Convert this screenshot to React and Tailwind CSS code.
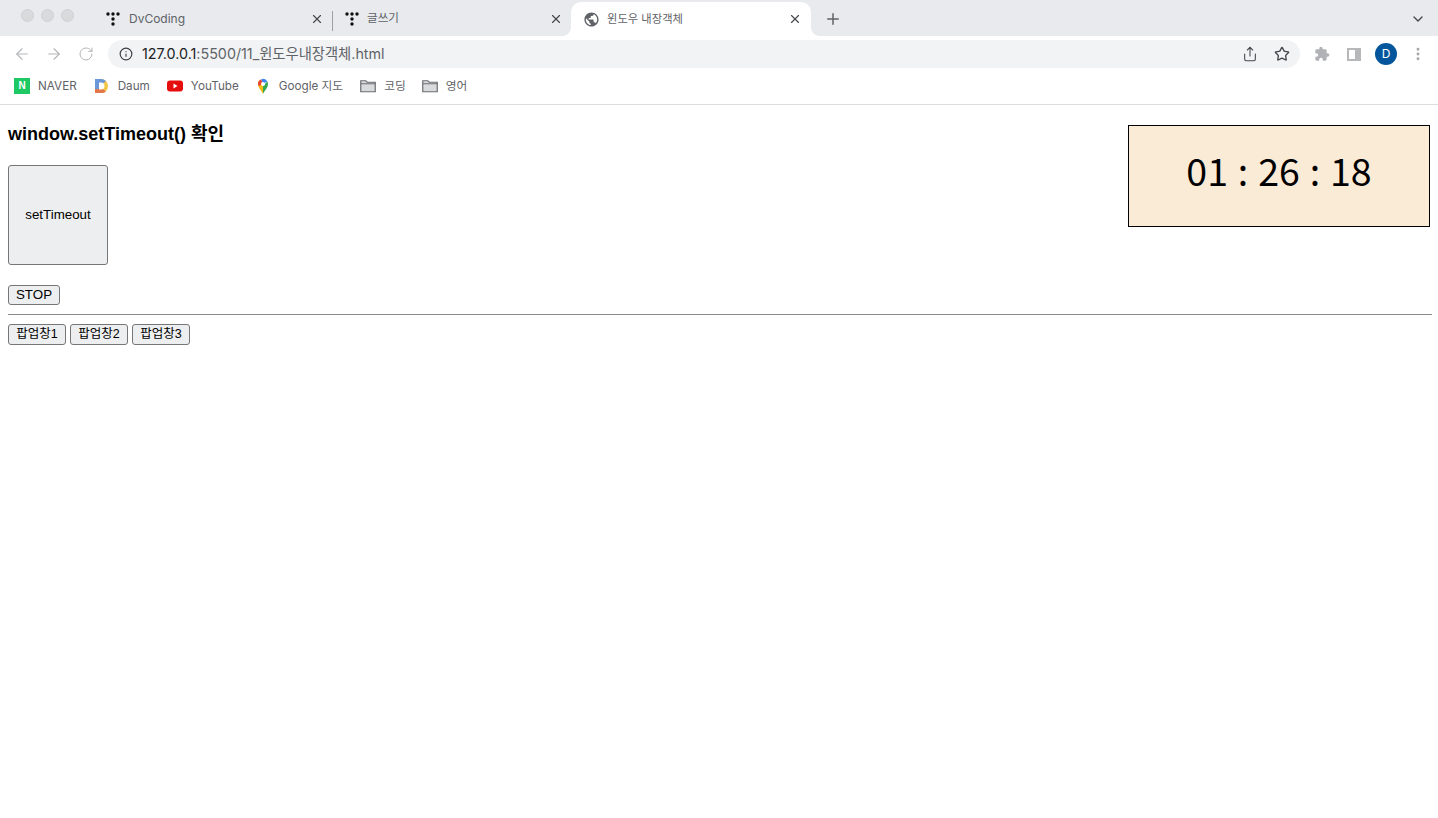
import { ArrowLeft, ArrowRight, RotateCw, Info, Star, Share, X, Plus, ChevronDown, EllipsisVertical } from "lucide-react";

const sans = "font-['Inter','Noto_Sans_CJK_KR',sans-serif]";

function DvIcon() {
    return (
        <svg width="16" height="16" viewBox="0 0 16 16" className="shrink-0">
            <circle cx="3" cy="3" r="1.7" fill="#111" />
            <circle cx="8" cy="3" r="1.7" fill="#111" />
            <circle cx="13" cy="3" r="1.7" fill="#111" />
            <circle cx="8" cy="8" r="1.7" fill="#111" />
            <circle cx="8" cy="13" r="1.7" fill="#111" />
        </svg>
    );
}

function GlobeIcon() {
    return (
        <svg width="17" height="17" viewBox="0 0 24 24" fill="#5f6368" className="shrink-0">
            <path d="M12 2C6.48 2 2 6.48 2 12s4.48 10 10 10 10-4.48 10-10S17.52 2 12 2zm-1 17.93c-3.95-.49-7-3.85-7-7.93 0-.62.08-1.21.21-1.79L9 15v1c0 1.1.9 2 2 2v1.93zm6.9-2.54c-.26-.81-1-1.39-1.9-1.39h-1v-3c0-.55-.45-1-1-1H8v-2h2c.55 0 1-.45 1-1V7h2c1.1 0 2-.9 2-2v-.41c2.93 1.19 5 4.06 5 7.41 0 2.08-.8 3.97-2.1 5.39z" />
        </svg>
    );
}

function Tab({ icon, title, titleClass, active, divider }) {
    return (
        <div
            className={`relative flex h-full items-center ${active ? "w-[240px] rounded-t-[10px] bg-white pl-[12px] pr-[9px]" : "w-[239px] pl-[12px] pr-[8px]"}`}
        >
            {icon}
            <span className={`flex-1 text-[#5f6368] ${sans} ${titleClass}`}>{title}</span>
            <X size={14} strokeWidth={2} className="text-[#45474a]" />
            {divider && <div className="absolute -right-px top-[9px] h-[20px] w-px bg-[#9aa0a6]" />}
            {active && (
                <>
                    <div className="absolute bottom-0 -left-[8px] h-[8px] w-[8px] bg-[radial-gradient(circle_at_0_0,#e8eaed_7.5px,#ffffff_8px)]" />
                    <div className="absolute bottom-0 -right-[8px] h-[8px] w-[8px] bg-[radial-gradient(circle_at_100%_0,#e8eaed_7.5px,#ffffff_8px)]" />
                </>
            )}
        </div>
    );
}

function NaverIcon() {
    return (
        <div className="flex h-4 w-4 items-center justify-center bg-[#1ec964] text-[10px] font-bold text-white font-['Liberation_Sans',sans-serif]">
            N
        </div>
    );
}

function DaumIcon() {
    return (
        <svg width="16" height="16" viewBox="0 0 16 16">
            <path d="M1 1h6a7 7 0 0 1 0 14H1z" fill="#f3c644" />
            <path d="M1 15V9h5l6 4.500A7 7 0 0 1 7 15z" fill="#e2774a" />
            <path d="M1 1h6a7 7 0 0 1 5 2L7 7 5 11 1 11z" fill="#6b97d8" />
            <path d="M5 4.500h2a3.500 3.500 0 0 1 0 7H5z" fill="#fff" />
        </svg>
    );
}

function YoutubeIcon() {
    return (
        <svg width="16" height="16" viewBox="0 0 16 16">
            <rect x="0" y="2.500" width="16" height="11" rx="3" fill="#e60d0d" />
            <path d="M6.500 5.500v5L10.500 8z" fill="#fff" />
        </svg>
    );
}

function MapsIcon() {
    return (
        <svg width="16" height="16" viewBox="0 0 16 16">
            <path d="M8 16C6.500 12.500 3 10 3 6a5 5 0 0 1 3-4.600L8 6z" fill="#f5b915" />
            <path d="M8 16c1.500-3.500 5-6 5-10a5 5 0 0 0-.6-2.400L8 8z" fill="#34a853" />
            <path d="M6 1.400A5 5 0 0 1 12.400 3.600L8 6z" fill="#4285f4" />
            <path d="M3 6a5 5 0 0 1 3-4.600L8 6 3.500 8z" fill="#ea4335" />
            <circle cx="8" cy="6" r="2" fill="#fff" />
        </svg>
    );
}

function FolderIcon() {
    return (
        <svg width="16" height="16" viewBox="0 0 16 16">
            <path d="M.75 2.750h5l1.500 1.500h8v9.500H.75z" fill="#d9dadc" stroke="#6b6e72" strokeWidth="1.200" />
            <path d="M.75 5.750h14.500" fill="none" stroke="#6b6e72" strokeWidth="1" />
        </svg>
    );
}

function Bookmark({ icon, label, className }) {
    return (
        <div className={`flex items-center gap-[8px] ${className}`}>
            {icon}
            <span className={`mt-px text-[11.7px] text-[#5f6368] ${sans}`}>{label}</span>
        </div>
    );
}

function BrowserChrome() {
    return (
        <div className="border-b border-[#dadce0] bg-white">
            {/* Tab strip */}
            <div className="flex h-[36px] items-end bg-[#e8eaed]">
                <div className="flex h-full w-[93px] items-center gap-[7px] pb-[6px] pl-[21px]">
                    <div className="h-[13px] w-[13px] rounded-full border border-[#cfd0d2] bg-[#d9dadc]" />
                    <div className="h-[13px] w-[13px] rounded-full border border-[#cfd0d2] bg-[#d9dadc]" />
                    <div className="h-[13px] w-[13px] rounded-full border border-[#cfd0d2] bg-[#d9dadc]" />
                </div>
                <div className="h-[34px] w-[239px]">
                    <Tab icon={<DvIcon />} title="DvCoding" titleClass="ml-[8px] text-xs" divider />
                </div>
                <div className="h-[34px] w-[239px]">
                    <Tab icon={<DvIcon />} title="글쓰기" titleClass="ml-[7px] text-[11.6px]" />
                </div>
                <div className="h-[34px] w-[240px]">
                    <Tab icon={<GlobeIcon />} title="윈도우 내장객체" titleClass="ml-[7px] text-[11.3px]" active />
                </div>
                <div className="flex h-[34px] flex-1 items-center justify-between pl-[13px] pr-[12px]">
                    <Plus size={18} strokeWidth={2} className="text-[#5f6368]" />
                    <ChevronDown size={16} strokeWidth={2} className="text-[#45474a]" />
                </div>
            </div>

            {/* Toolbar */}
            <div className="flex h-[32px] items-end">
                <div className="flex h-[28px] w-[108px] items-center gap-[14px] pl-[13px]">
                    <ArrowLeft size={18} strokeWidth={1.5} className="text-[#b4b6b9]" />
                    <ArrowRight size={18} strokeWidth={1.5} className="text-[#b4b6b9]" />
                    <RotateCw size={16} strokeWidth={1.5} className="ml-px text-[#b4b6b9]" />
                </div>
                <div className="flex h-[28px] w-[1192px] items-center rounded-full bg-[#f1f3f4] pl-[11px] pr-[10px]">
                    <Info size={14} strokeWidth={2} className="text-[#3c4043]" />
                    <span className={`ml-[9px] flex-1 text-[14.3px] text-[#5f6368] ${sans}`}>
                        <span className="text-[#202124]">127.0.0.1</span>:5500/11_윈도우내장객체.html
                    </span>
                    <Share size={16} strokeWidth={1.6} className="text-[#45474a]" />
                    <Star size={16} strokeWidth={2} className="ml-[16px] text-[#45474a]" />
                </div>
                <div className="flex h-[28px] flex-1 items-center pl-[14px]">
                    <svg width="16" height="16" viewBox="0 0 24 24" fill="#b0b2b5">
                        <path d="M20.5 11H19V7c0-1.100-.9-2-2-2h-4V3.500C13 2.120 11.880 1 10.500 1S8 2.120 8 3.500V5H4c-1.100 0-1.990.9-1.990 2v3.800H3.500c1.490 0 2.700 1.210 2.700 2.700s-1.210 2.700-2.700 2.700H2V20c0 1.100.9 2 2 2h3.800v-1.500c0-1.490 1.210-2.700 2.700-2.700 1.490 0 2.700 1.210 2.700 2.700V22H17c1.100 0 2-.9 2-2v-4h1.500c1.380 0 2.500-1.120 2.500-2.500S21.880 11 20.500 11z" />
                    </svg>
                    <div className="ml-[17px] flex h-[13px] w-[14px] justify-start border-2 border-[#b7b8ba] bg-[#b7b8ba]">
                        <div className="h-full w-[6px] bg-white" />
                    </div>
                    <div className={`ml-[14px] flex h-[22px] w-[22px] items-center justify-center rounded-full bg-[#04569c] text-xs text-white ${sans}`}>
                        D
                    </div>
                    <EllipsisVertical size={16} strokeWidth={2.4} className="ml-[13px] text-[#a6a8ab]" />
                </div>
            </div>

            {/* Bookmarks */}
            <div className="flex h-[36px] items-center pl-[14px]">
                <Bookmark icon={<NaverIcon />} label="NAVER" />
                <Bookmark icon={<DaumIcon />} label="Daum" className="ml-[17px]" />
                <Bookmark icon={<YoutubeIcon />} label="YouTube" className="ml-[17px]" />
                <Bookmark icon={<MapsIcon />} label="Google 지도" className="ml-[16px]" />
                <Bookmark icon={<FolderIcon />} label="코딩" className="ml-[17px]" />
                <Bookmark icon={<FolderIcon />} label="영어" className="ml-[16px]" />
            </div>
        </div>
    );
}

function PlainButton({ children, className = "" }) {
    return (
        <button className={`rounded-[3px] border border-[#767676] bg-[#edeeef] text-center text-black font-['Liberation_Sans','Noto_Sans_CJK_KR',sans-serif] ${className}`}>
            {children}
        </button>
    );
}

export default function App() {
    return (
        <div className="h-[818px] w-[1438px] overflow-hidden bg-white">
            <BrowserChrome />
            <div className="pl-[8px] pr-[6px]">
                <div className="flex items-start justify-between">
                    <div>
                        <h3 className="mt-[16px] text-[18px] font-bold leading-[26px] text-black font-['Liberation_Sans','Noto_Sans_CJK_KR',sans-serif]">
                            window.setTimeout() 확인
                        </h3>
                        <PlainButton className="mt-[18px] block h-[100px] w-[100px] text-[13.33px]">setTimeout</PlainButton>
                        <PlainButton className="mt-[20px] block h-[20px] w-[52px] text-[13.33px] leading-[18px]">STOP</PlainButton>
                    </div>
                    <div className="mr-[2px] mt-[20px] flex h-[102px] w-[302px] items-center justify-center border border-black bg-[#faebd7] pb-[12px] text-[37.5px] text-black [word-spacing:1.5px] font-['Noto_Sans_CJK_KR',sans-serif]">
                        01 : 26 : 18
                    </div>
                </div>
                <hr className="mt-[9px] border-[#8a8a8a]" />
                <div className="mt-[9px] flex gap-[4px]">
                    <PlainButton className="h-[21px] w-[58px] text-[12.5px] leading-[19px]">팝업창1</PlainButton>
                    <PlainButton className="h-[21px] w-[58px] text-[12.5px] leading-[19px]">팝업창2</PlainButton>
                    <PlainButton className="h-[21px] w-[58px] text-[12.5px] leading-[19px]">팝업창3</PlainButton>
                </div>
            </div>
        </div>
    );
}
